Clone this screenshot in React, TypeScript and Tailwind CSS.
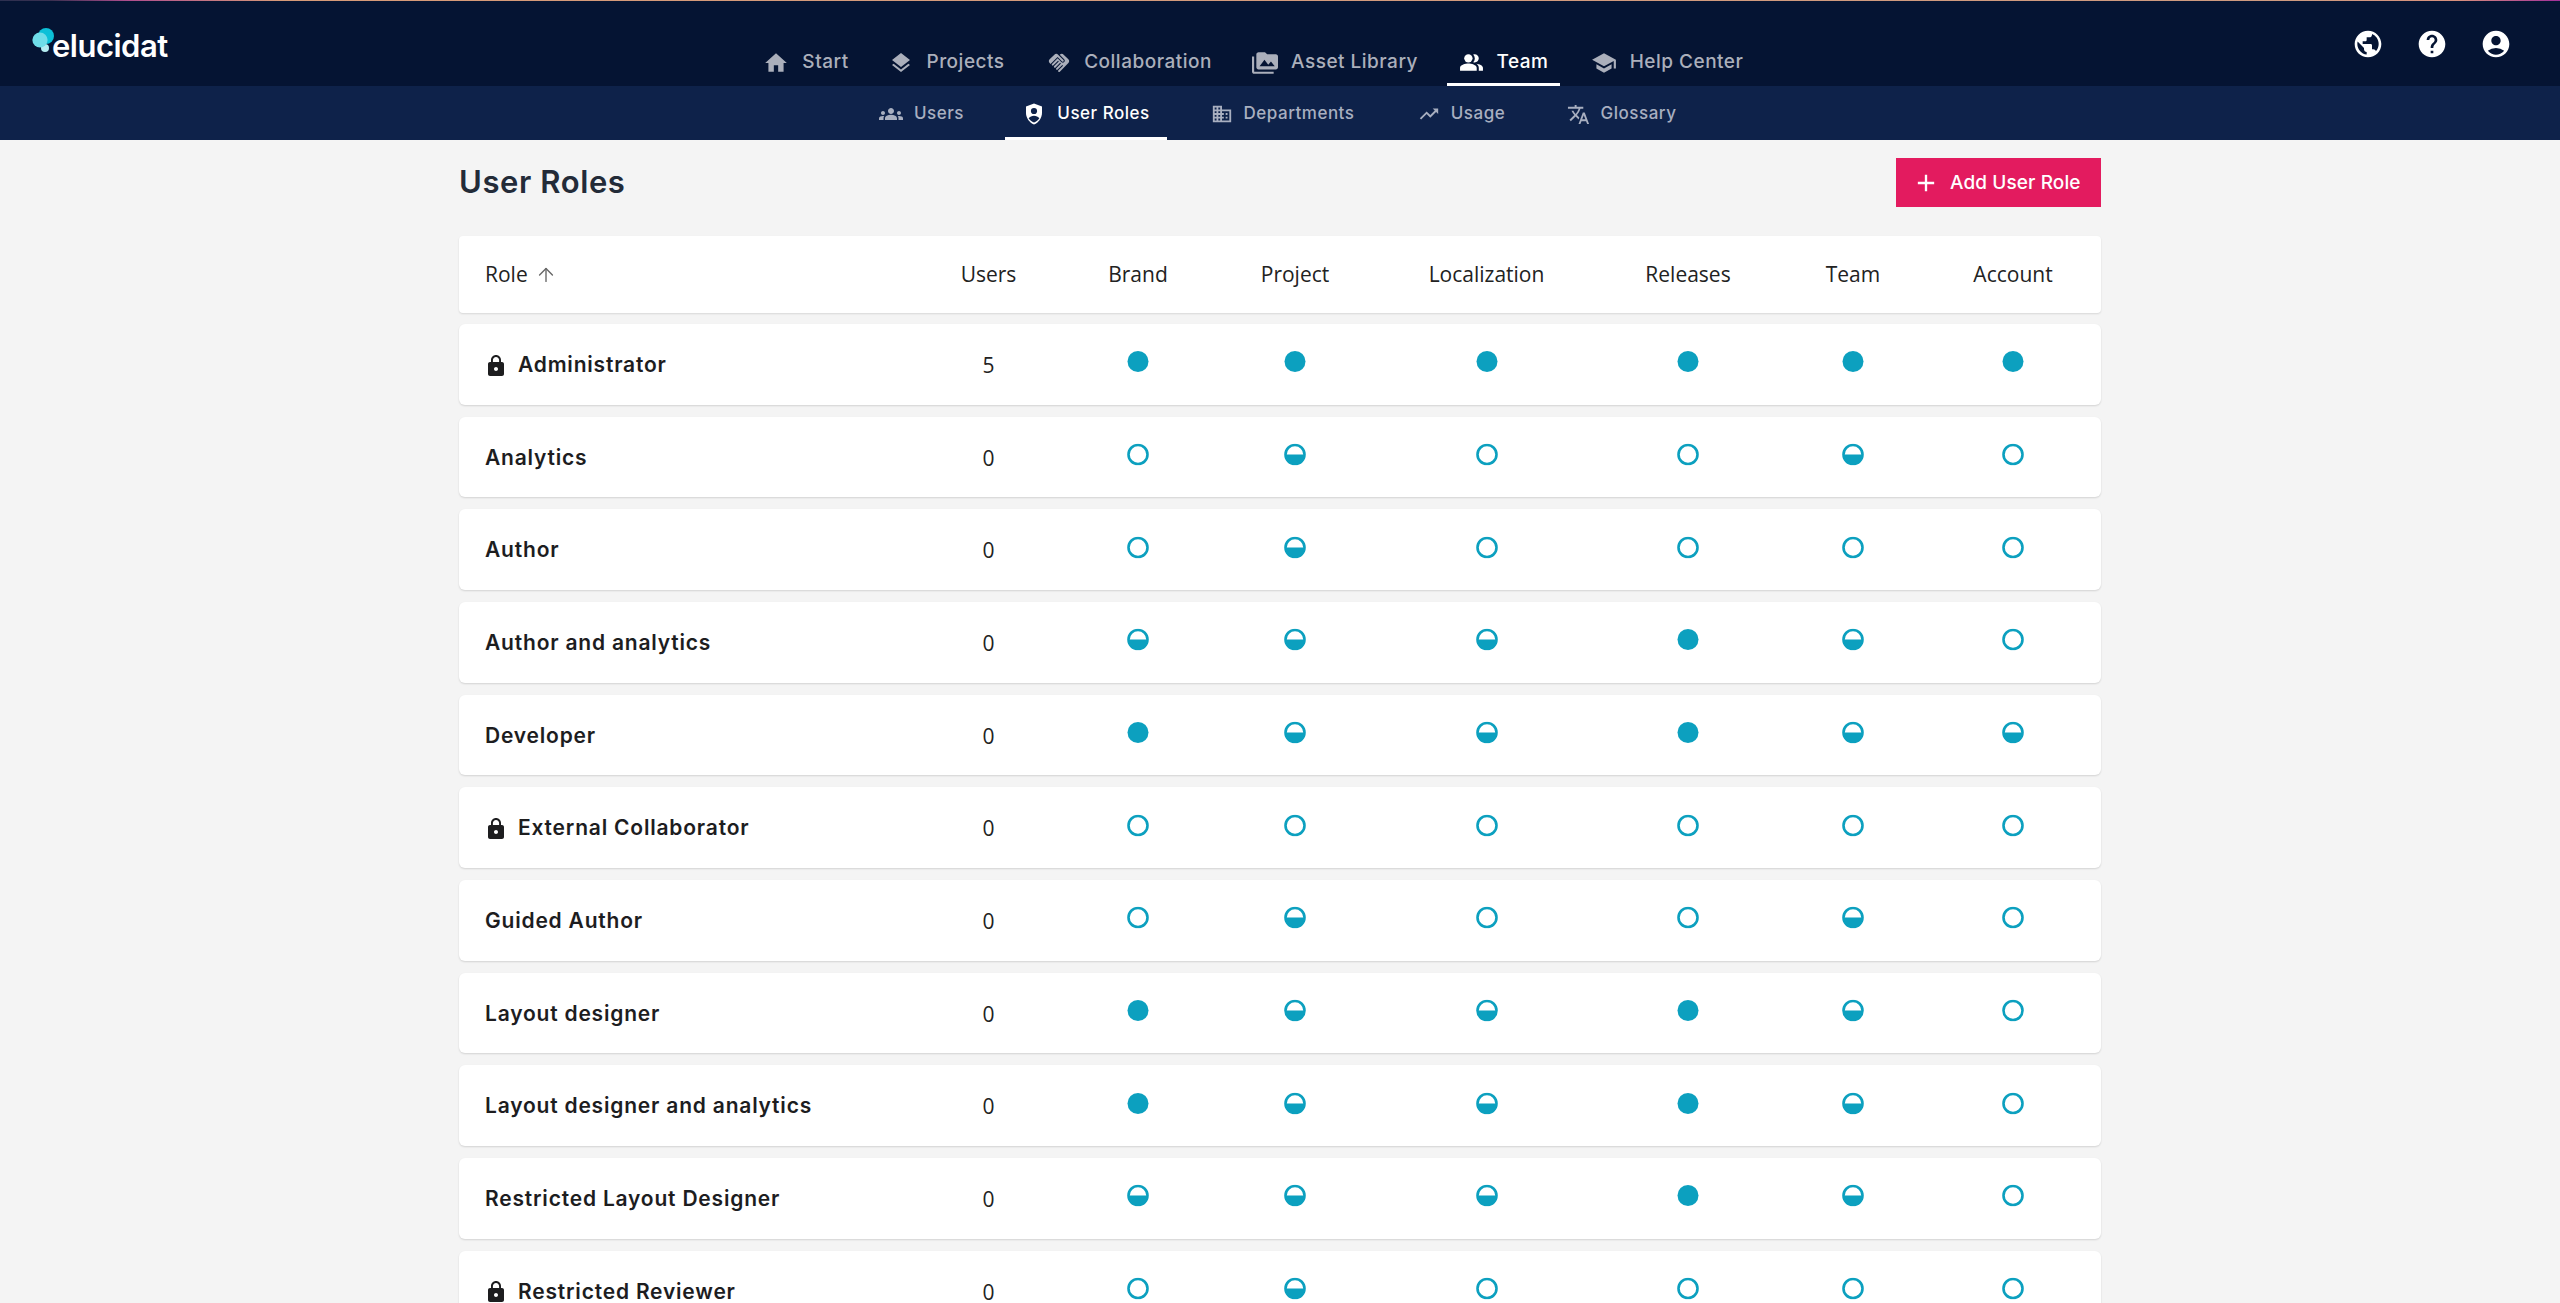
import type { ReactNode } from 'react'
import { ArrowUp } from 'lucide-react'
import {
  MdHome, MdLayers, MdHandshake, MdPermMedia, MdPeopleAlt, MdSchool, MdPublic, MdHelp, MdAccountCircle,
  MdGroups, MdDomain, MdTrendingUp, MdTranslate, MdLock, MdAdd,
} from 'react-icons/md'

type Level = 'full' | 'half' | 'none'

interface Role {
  name: string
  users: number
  locked?: boolean
  perms: Level[]
}

const F: Level = 'full'
const H: Level = 'half'
const E: Level = 'none'

const roles: Role[] = [
  { name: 'Administrator', users: 5, locked: true, perms: [F, F, F, F, F, F] },
  { name: 'Analytics', users: 0, perms: [E, H, E, E, H, E] },
  { name: 'Author', users: 0, perms: [E, H, E, E, E, E] },
  { name: 'Author and analytics', users: 0, perms: [H, H, H, F, H, E] },
  { name: 'Developer', users: 0, perms: [F, H, H, F, H, H] },
  { name: 'External Collaborator', users: 0, locked: true, perms: [E, E, E, E, E, E] },
  { name: 'Guided Author', users: 0, perms: [E, H, E, E, H, E] },
  { name: 'Layout designer', users: 0, perms: [F, H, H, F, H, E] },
  { name: 'Layout designer and analytics', users: 0, perms: [F, H, H, F, H, E] },
  { name: 'Restricted Layout Designer', users: 0, perms: [H, H, H, F, H, E] },
  { name: 'Restricted Reviewer', users: 0, locked: true, perms: [E, H, E, E, E, E] },
]

const columns = ['Users', 'Brand', 'Project', 'Localization', 'Releases', 'Team', 'Account']

const gridCols = 'grid grid-cols-[454px_151px_148px_166px_217px_186px_144px_176px] items-center'

function ShieldPerson() {
  return (
    <svg width="24" height="24" viewBox="0 0 24 24" aria-hidden="true">
      <path d="M12 1.5 4 4.6v6.2c0 5.2 3.4 10 8 11.7 4.6-1.7 8-6.5 8-11.7V4.6z" fill="#ffffff" />
      <circle cx="12" cy="9" r="3.1" fill="#0e224a" />
      <path d="M6.6 16.2c1.3-1.6 3.2-2.5 5.4-2.5s4.1.9 5.4 2.5c-1.2 1.9-3.1 3.5-5.4 4.2-2.3-.7-4.2-2.3-5.4-4.2z" fill="#0e224a" />
    </svg>
  )
}

function Logo() {
  return (
    <div className="mt-[29px] ml-[32px] flex h-[32px] w-[711px] items-end">
      <svg width="23" height="24" viewBox="0 0 23 24" className="mb-[10px] shrink-0" aria-hidden="true">
        <circle cx="14" cy="8" r="8" fill="#0cc0d8" />
        <circle cx="13" cy="20" r="4" fill="#b4ecf2" />
        <circle cx="8" cy="12" r="7.6" fill="#6fdde9" />
      </svg>
      <span className="-ml-[3px] font-['Inter',sans-serif] text-[31px] leading-[32px] font-semibold tracking-[-0.5px] text-white">elucidat</span>
    </div>
  )
}

function TopItem({ icon, label, width, active }: { icon: ReactNode; label: string; width: string; active?: boolean }) {
  return (
    <div className={`flex h-full shrink-0 items-center justify-center gap-[13px] border-b-[3px] pt-[2px] ${width} ${active ? 'border-white text-white' : 'border-transparent text-[#abafbb]'}`}>
      {icon}
      <span className="font-['Inter',sans-serif] text-[19px] font-medium tracking-[0.5px] whitespace-nowrap">{label}</span>
    </div>
  )
}

function SubItem({ icon, label, width, active }: { icon: ReactNode; label: string; width: string; active?: boolean }) {
  return (
    <div className={`flex h-full shrink-0 items-center justify-center gap-[11px] border-b-[3px] pt-[5px] ${width} ${active ? 'border-white text-white' : 'border-transparent text-[#a8afc0]'}`}>
      {icon}
      <span className="font-['Inter',sans-serif] text-[17px] font-medium tracking-[0.5px] whitespace-nowrap">{label}</span>
    </div>
  )
}

function Dot({ level }: { level: Level }) {
  return (
    <svg width="22" height="22" viewBox="0 0 22 22" className="-translate-y-[2.5px]" aria-hidden="true">
      {level === 'full' && <circle cx="11" cy="11" r="10.5" fill="#0ca0bf" />}
      {level !== 'full' && <circle cx="11" cy="11" r="9.5" fill="none" stroke="#0ca0bf" strokeWidth="2.6" />}
      {level === 'half' && <path d="M1 11h20a10 10 0 0 1-20 0z" fill="#0ca0bf" />}
    </svg>
  )
}

export default function App() {
  return (
    <div className="flex h-screen flex-col overflow-hidden bg-[#f4f4f4]">
      <div className="h-px shrink-0 bg-[linear-gradient(90deg,#2c3050_0,#3a3050_2%,#b04e8e_5%,#d79a78_11%,#cf9a80_90%,#d8907c_96%,#a2309a_100%)]" />
      <header className="flex h-[85px] shrink-0 bg-[#051433]">
        <Logo />
        <nav className="mt-[39px] flex h-[46px]">
          <TopItem width="w-[126px]" label="Start" icon={<MdHome size={26} />} />
          <TopItem width="w-[156px]" label="Projects" icon={<MdLayers size={24} />} />
          <TopItem width="w-[209px]" label="Collaboration" icon={<MdHandshake size={24} />} />
          <TopItem width="w-[202px]" label="Asset Library" icon={<MdPermMedia size={26} />} />
          <div className="w-[11px] shrink-0" />
          <TopItem width="w-[113px]" label="Team" active icon={<MdPeopleAlt size={25} />} />
          <TopItem width="w-[214px]" label="Help Center" icon={<MdSchool size={26} />} />
        </nav>
        <div className="ml-auto flex items-center gap-[32px] pr-[48px] text-white">
          <MdPublic size={32} />
          <MdHelp size={32} />
          <MdAccountCircle size={32} />
        </div>
      </header>
      <div className="flex h-[54px] shrink-0 bg-[#0e224a] pl-[838px]">
        <SubItem width="w-[167px]" label="Users" icon={<MdGroups size={24} />} />
        <SubItem width="w-[162px]" active label="User Roles" icon={<ShieldPerson />} />
        <SubItem width="w-[231px]" label="Departments" icon={<MdDomain size={22} />} />
        <SubItem width="w-[127px]" label="Usage" icon={<MdTrendingUp size={22} />} />
        <SubItem width="w-[193px]" label="Glossary" icon={<MdTranslate size={23} />} />
      </div>
      <main className="flex-1 px-[459px] pt-[18px]">
        <div className="mb-[29px] flex h-[49px] items-center justify-between">
          <h1 className="font-['Inter',sans-serif] text-[31px] font-semibold tracking-[0.6px] text-[#232b38]">User Roles</h1>
          <button className="flex h-full w-[205px] items-center gap-[10px] bg-[#e31b5f] pt-px pl-[16px] text-white">
            <MdAdd size={28} />
            <span className="font-['Inter',sans-serif] text-[19px] font-medium tracking-[0.1px] whitespace-nowrap">Add User Role</span>
          </button>
        </div>

        <div className={`${gridCols} mb-[11px] h-[77px] rounded-[4px] bg-white pt-px font-['Open_Sans',sans-serif] text-[21px] text-[#222222] shadow-[0_1px_2px_rgba(0,0,0,0.12)]`}>
          <div className="flex items-center gap-[7px] pl-[26px]">
            <span>Role</span>
            <ArrowUp size={22} strokeWidth={1.5} className="text-[#666666]" />
          </div>
          {columns.map((col) => (
            <div key={col} className="text-center">{col}</div>
          ))}
        </div>

        <div className="flex flex-col gap-[12px]">
          {roles.map((role) => (
            <div key={role.name} className={`${gridCols} h-[80.67px] shrink-0 rounded-[6px] bg-white shadow-[0_1px_2px_rgba(0,0,0,0.14)]`}>
              <div className="flex items-center gap-[10px] pt-px pl-[26px] text-[#1d1d1f]">
                {role.locked && <MdLock size={24} className="-ml-px mt-[2px]" />}
                <span className="font-['Inter',sans-serif] text-[21px] font-semibold tracking-[0.8px]">{role.name}</span>
              </div>
              <div className="pt-[3px] text-center font-['Open_Sans',sans-serif] text-[21px] text-[#222222]">{role.users}</div>
              {role.perms.map((level, idx) => (
                <div key={idx} className="flex justify-center">
                  <Dot level={level} />
                </div>
              ))}
            </div>
          ))}
        </div>
      </main>
    </div>
  )
}
